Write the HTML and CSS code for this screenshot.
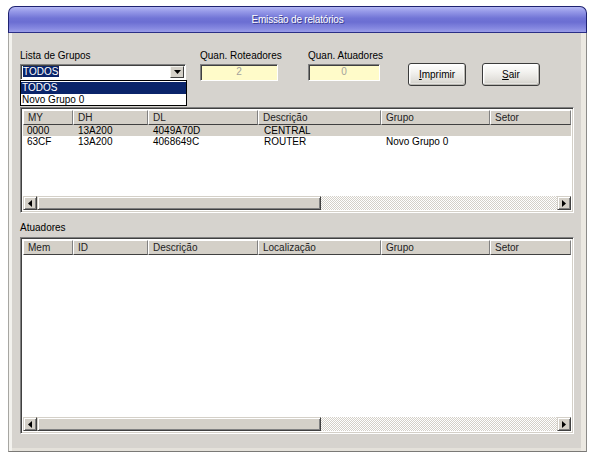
FILE: index.html
```html
<!DOCTYPE html>
<html>
<head>
<meta charset="utf-8">
<link rel="stylesheet" href="styles.css">
</head>
<body>
<div class="window">
  <div class="titlebar"><span class="title">Emissão de relatórios</span></div>
  <div class="client">
    <div class="top">
      <div class="field f-group">
        <div class="lbl">Lista de Grupos</div>
        <div class="combo">
          <div class="combo-text"><span class="sel">TODOS</span></div>
          <div class="combo-btn"><svg width="7" height="4" viewBox="0 0 7 4"><path d="M0 0h7L3.5 4z" fill="#000"/></svg></div>
        </div>
        <div class="dropdown">
          <div class="opt hl">TODOS</div>
          <div class="opt">Novo Grupo 0</div>
        </div>
      </div>
      <div class="field f-rot">
        <div class="lbl">Quan. Roteadores</div>
        <div class="numbox">2</div>
      </div>
      <div class="field f-atu">
        <div class="lbl">Quan. Atuadores</div>
        <div class="numbox">0</div>
      </div>
      <div class="buttons">
        <div class="btn b-imp"><u>I</u>mprimir</div>
        <div class="btn b-sair"><u>S</u>air</div>
      </div>
    </div>

    <div class="list list1">
      <div class="lhead">
        <div class="hc c1">MY</div>
        <div class="hc c2">DH</div>
        <div class="hc c3">DL</div>
        <div class="hc c4">Descrição</div>
        <div class="hc c5">Grupo</div>
        <div class="hc c6">Setor</div>
      </div>
      <div class="lbody">
        <div class="row selrow">
          <div class="rc c1">0000</div>
          <div class="rc c2">13A200</div>
          <div class="rc c3">4049A70D</div>
          <div class="rc c4">CENTRAL</div>
          <div class="rc c5"></div>
          <div class="rc c6"></div>
        </div>
        <div class="row">
          <div class="rc c1">63CF</div>
          <div class="rc c2">13A200</div>
          <div class="rc c3">4068649C</div>
          <div class="rc c4">ROUTER</div>
          <div class="rc c5">Novo Grupo 0</div>
          <div class="rc c6"></div>
        </div>
      </div>
      <div class="hscroll">
        <div class="sbtn"><svg width="4" height="7" viewBox="0 0 4 7"><path d="M4 0v7L0 3.5z" fill="#000"/></svg></div>
        <div class="thumb"></div>
        <div class="track"></div>
        <div class="sbtn"><svg width="4" height="7" viewBox="0 0 4 7"><path d="M0 0v7L4 3.5z" fill="#000"/></svg></div>
      </div>
    </div>

    <div class="lbl sect">Atuadores</div>

    <div class="list list2">
      <div class="lhead">
        <div class="hc c1">Mem</div>
        <div class="hc c2">ID</div>
        <div class="hc c3">Descrição</div>
        <div class="hc c4">Localização</div>
        <div class="hc c5">Grupo</div>
        <div class="hc c6">Setor</div>
      </div>
      <div class="lbody"></div>
      <div class="hscroll">
        <div class="sbtn"><svg width="4" height="7" viewBox="0 0 4 7"><path d="M4 0v7L0 3.5z" fill="#000"/></svg></div>
        <div class="thumb"></div>
        <div class="track"></div>
        <div class="sbtn"><svg width="4" height="7" viewBox="0 0 4 7"><path d="M0 0v7L4 3.5z" fill="#000"/></svg></div>
      </div>
    </div>
  </div>
</div>
</body>
</html>
```

FILE: styles.css
```css
* { box-sizing: border-box; }
html, body { margin: 0; padding: 0; background: #ffffff; }
body {
  font-family: "Liberation Sans", Arial, sans-serif;
  font-size: 10px;
  color: #000;
  width: 594px;
  height: 463px;
  overflow: hidden;
}

.window {
  margin: 6px 0 0 8px;
  width: 579px;
  height: 446px;
  display: flex;
  flex-direction: column;
}

.titlebar {
  height: 27px;
  border: 1px solid #1e2270;
  border-bottom-color: #2a2e86;
  border-radius: 7px 7px 0 0;
  background: linear-gradient(#b4b7f4 0%, #9699e8 18%, #7174d6 45%, #6b6ed2 60%, #8588e0 85%, #9a9de8 100%);
  display: flex;
  align-items: center;
  justify-content: center;
}
.title {
  color: #fff;
  font-size: 10px;
  letter-spacing: -0.2px;
  text-shadow: 1px 1px 0 #3a3d8e;
}

.client {
  flex: 1;
  background: #d6d3ce;
  border-left: 1px solid #a7a6a2;
  border-right: 1px solid #8c8b88;
  border-bottom: 1px solid #7a7976;
  box-shadow: inset 3px 0 0 #f3f2ee, inset -5px 0 0 #ece9e2, inset 0 -3px 0 #e4e1da;
  padding: 16px 0 0 11px;
  display: flex;
  flex-direction: column;
}

.lbl { height: 13px; line-height: 13px; white-space: nowrap; }

.top {
  height: 58px;
  display: flex;
  align-items: flex-start;
}
.field { display: flex; flex-direction: column; position: relative; }
.f-group { width: 166px; }
.f-rot { width: 78px; margin-left: 14px; }
.f-atu { width: 72px; margin-left: 30px; }

.combo {
  margin-top: 2px;
  height: 16px;
  background: #fff;
  border: 1px solid;
  border-color: #808080 #fff #fff #808080;
  box-shadow: inset 1px 1px 0 #404040;
  display: flex;
  padding: 1px 1px 1px 2px;
}
.combo-text { flex: 1; line-height: 12px; }
.sel { background: #0a246a; color: #fff; padding: 0 1px 0 0; }
.combo-btn {
  width: 14px;
  background: #d4d0c8;
  border: 1px solid;
  border-color: #f4f3ee #404040 #404040 #f4f3ee;
  display: flex;
  align-items: center;
  justify-content: center;
}

.dropdown {
  position: absolute;
  left: 0;
  top: 31px;
  width: 167px;
  height: 26px;
  background: #fff;
  border: 1px solid #000;
  padding: 1px 0;
  z-index: 2;
}
.opt { height: 12px; line-height: 12px; padding-left: 1px; }
.opt.hl { background: #0a246a; color: #fff; }

.numbox {
  margin-top: 2px;
  height: 17px;
  background: #fffbc9;
  border: 1px solid;
  border-color: #808080 #fff #fff #808080;
  box-shadow: inset 1px 1px 0 #404040;
  text-align: center;
  color: #a3a19c;
  line-height: 14px;
}

.buttons { display: flex; gap: 16px; margin-left: 28px; margin-top: 14px; }
.btn {
  height: 23px;
  border: 1px solid #3b3b3b;
  border-radius: 3px;
  background: linear-gradient(#ffffff 0%, #f2f1ee 40%, #e2e0db 75%, #cfcdc7 100%);
  box-shadow: inset 1px 1px 0 #fff, inset -1px -1px 0 #b9b7b1, inset 0 0 0 2px rgba(255,255,255,0.4);
  display: flex;
  align-items: center;
  justify-content: center;
}
.btn u { text-decoration: underline; }
.b-imp { width: 58px; }
.b-sair { width: 58px; }

.list {
  width: 554px;
  background: #fff;
  border: 1px solid;
  border-color: #808080 #fff #fff #808080;
  box-shadow: inset 1px 1px 0 #404040, inset -1px -1px 0 #d4d0c8;
  padding: 2px;
  display: flex;
  flex-direction: column;
}
.list1 { height: 106px; }
.list2 { height: 197px; }

.lhead { display: flex; height: 15px; flex: none; }
.hc {
  height: 15px;
  line-height: 13px;
  padding-left: 4px;
  background: #d4d0c8;
  border: 1px solid;
  border-color: #fff #808080 #404040 #fff;
  white-space: nowrap;
  overflow: hidden;
  color: #222;
}
.c1 { width: 50px; }
.c2 { width: 75px; }
.c3 { width: 110px; }
.c4 { width: 123px; }
.c5 { width: 109px; }
.c6 { flex: 1; }
.lbody { flex: 1; }
.row { display: flex; height: 11px; line-height: 11px; }
.row .rc { padding-left: 5px; white-space: nowrap; }
.row .c1 { padding-left: 4px; }
.row .c4 { padding-left: 6px; }
.selrow { background: #d4d0c8; }

.hscroll { display: flex; height: 14px; flex: none; }
.sbtn {
  width: 14px;
  background: #d4d0c8;
  border: 1px solid;
  border-color: #d4d0c8 #404040 #404040 #d4d0c8;
  box-shadow: inset 1px 1px 0 #fff, inset -1px -1px 0 #808080;
  display: flex;
  align-items: center;
  justify-content: center;
}
.thumb {
  width: 284px;
  background: #d4d0c8;
  border: 1px solid;
  border-color: #d4d0c8 #404040 #404040 #d4d0c8;
  box-shadow: inset 1px 1px 0 #fff, inset -1px -1px 0 #808080;
}
.track {
  flex: 1;
  background: repeating-conic-gradient(#d4d0c8 0 25%, #ffffff 0 50%) 0 0 / 2px 2px;
}

.sect { margin-top: 8px; margin-bottom: 3px; }
```
